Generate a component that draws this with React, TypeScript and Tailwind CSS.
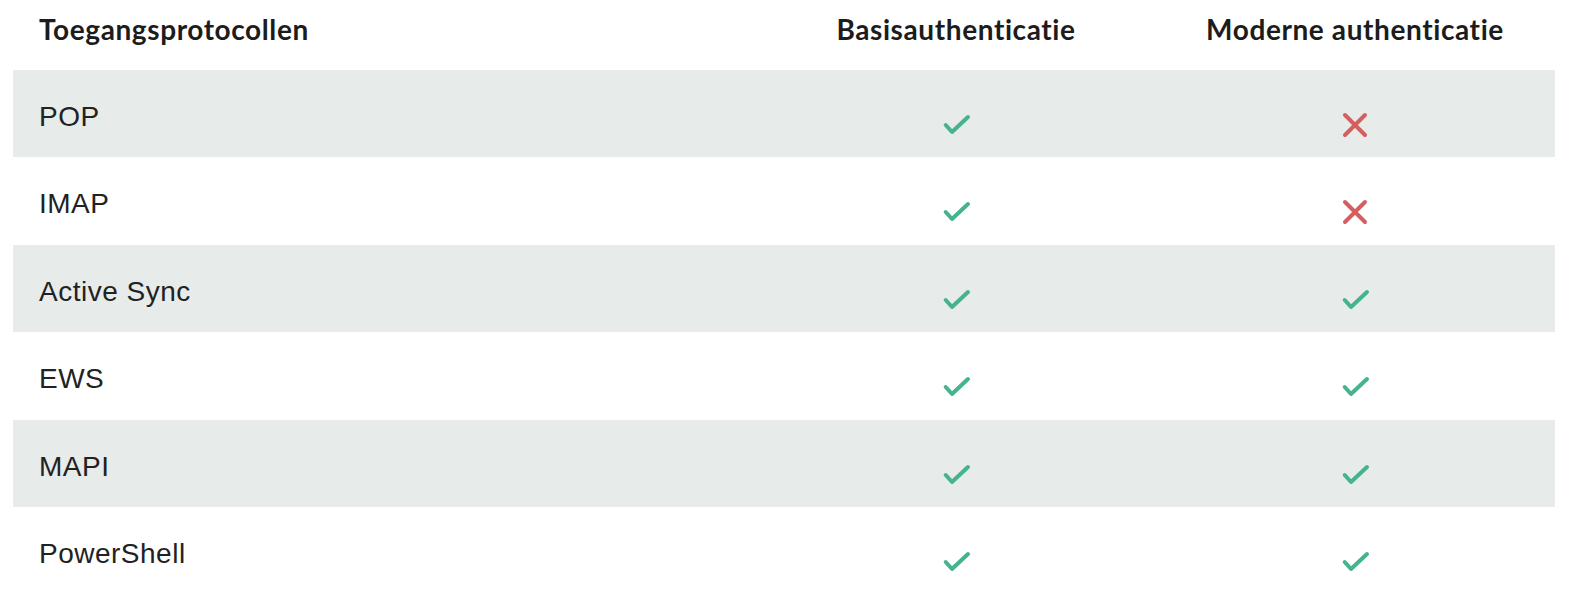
const rows = [
  { name: "POP", basic: true, modern: false },
  { name: "IMAP", basic: true, modern: false },
  { name: "Active Sync", basic: true, modern: true },
  { name: "EWS", basic: true, modern: true },
  { name: "MAPI", basic: true, modern: true },
  { name: "PowerShell", basic: true, modern: true },
];

const Check = () => (
  <svg width="32" height="28" viewBox="0 0 32 28" fill="none">
    <path
      d="M5.7 14 L12 21 L28 6"
      stroke="#45b38d"
      strokeWidth="4"
      strokeLinecap="round"
      strokeLinejoin="round"
    />
  </svg>
);

const Cross = () => (
  <svg width="28" height="28" viewBox="0 0 28 28" fill="none">
    <path
      d="M4 4 L24 24 M24 4 L4 24"
      stroke="#d35f5f"
      strokeWidth="4"
      strokeLinecap="round"
    />
  </svg>
);

const App = () => {
  return (
    <div className="bg-white min-h-screen w-full">
      <div className="ml-[13px] w-[1542px]">
        <div className="grid grid-cols-[744px_398px_400px] h-[70px] pt-[13px] font-['Lato',sans-serif] font-bold text-[28px] leading-[32px] tracking-[0.6px] text-[#1c1c1c]">
          <div className="pl-[26px]">Toegangsprotocollen</div>
          <div className="text-center">Basisauthenticatie</div>
          <div className="text-center">Moderne authenticatie</div>
        </div>

        {rows.map((row, index) => (
          <div
            key={row.name}
            className={`grid grid-cols-[744px_398px_400px] h-[87.4px] ${
              index % 2 === 0 ? "bg-[#e7ebea]" : "bg-white"
            }`}
          >
            <div className="pl-[26px] pt-[31px] font-['Liberation_Sans',Arial,sans-serif] text-[28px] leading-[32px] tracking-[0.5px] text-[#222222]">
              {row.name}
            </div>
            <div className="flex justify-center pt-[41px]">
              {row.basic ? <Check /> : <Cross />}
            </div>
            <div className="flex justify-center pt-[41px]">
              {row.modern ? <Check /> : <Cross />}
            </div>
          </div>
        ))}
      </div>
    </div>
  );
};

export default App;
